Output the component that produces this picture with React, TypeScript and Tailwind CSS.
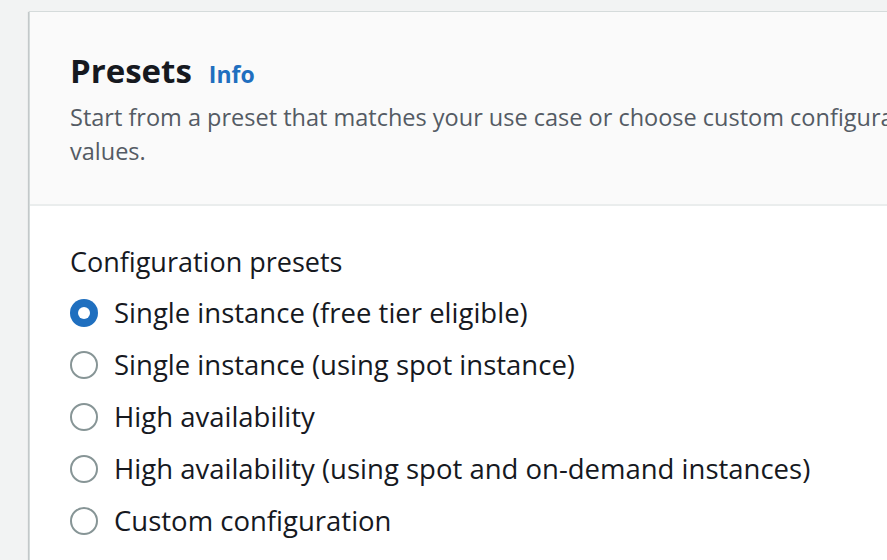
import { useState } from 'react';

const presets = [
  'Single instance (free tier eligible)',
  'Single instance (using spot instance)',
  'High availability',
  'High availability (using spot and on-demand instances)',
  'Custom configuration',
];

export default function App() {
  const [selected, setSelected] = useState(0);

  return (
    <div
      className="h-[560px] w-full overflow-hidden bg-[#f2f3f3] pl-[29px] pt-[11px]"
      style={{ fontFamily: '"Open Sans", "Noto Sans", sans-serif' }}
    >
      <div className="w-[1040px] min-h-[600px] bg-white border-l border-t border-[#d5dbdb] shadow-[0_1px_1px_0_rgba(0,28,36,0.3),1px_1px_1px_0_rgba(0,28,36,0.15),-1px_1px_1px_0_rgba(0,28,36,0.15)]">
        {/* Header */}
        <div className="bg-[#fafafa] border-b-2 border-[#eaeded] pl-[40px] pt-[39px] pb-[36px]">
          <div className="flex items-baseline gap-[17px]">
            <h2 className="text-[33px] leading-[40px] font-bold text-[#16191f]">Presets</h2>
            <a href="#" className="text-[23px] font-bold text-[#1f6fbf]">
              Info
            </a>
          </div>
          <p className="mt-[8px] max-w-[900px] text-[23.5px] leading-[34px] text-[#545b64]">
            Start from a preset that matches your use case or choose custom configuration values.
          </p>
        </div>

        {/* Body */}
        <div className="pl-[40px] pt-[38px]">
          <div className="text-[27px] leading-[35px] text-[#16191f]">Configuration presets</div>
          <div className="mt-[8px] flex flex-col">
            {presets.map((label, i) => (
              <label
                key={label}
                className="flex h-[52px] items-center gap-[16px] cursor-pointer"
                onClick={() => setSelected(i)}
              >
                {selected === i ? (
                  <span className="flex h-[28px] w-[28px] shrink-0 items-center justify-center rounded-full bg-[#1f6fbf]">
                    <span className="h-[12px] w-[12px] rounded-full bg-white" />
                  </span>
                ) : (
                  <span className="h-[28px] w-[28px] shrink-0 rounded-full border-[2.5px] border-[#879596] bg-white" />
                )}
                <span className="text-[27.5px] text-[#16191f]">{label}</span>
              </label>
            ))}
          </div>
        </div>
      </div>
    </div>
  );
}
